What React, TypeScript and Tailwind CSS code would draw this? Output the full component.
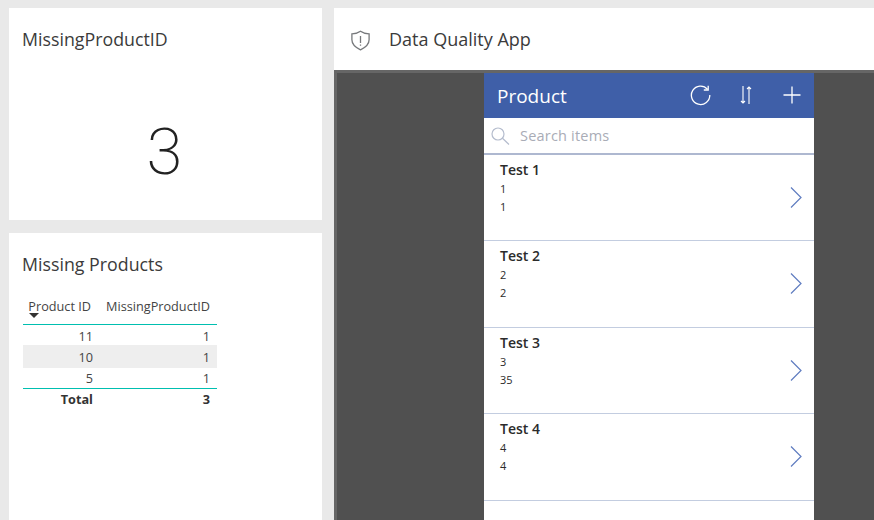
import React from 'react';

const FONT = "font-['Open_Sans','Noto_Sans',sans-serif]";

const items = [
    { title: 'Test 1', a: '1', b: '1', h: 'h-[86px]' },
    { title: 'Test 2', a: '2', b: '2', h: 'h-[87px]' },
    { title: 'Test 3', a: '3', b: '35', h: 'h-[86px]' },
    { title: 'Test 4', a: '4', b: '4', h: 'h-[87px]' },
];

const rows = [
    { id: '11', n: '1', cls: 'h-[20px] leading-[22px]' },
    { id: '10', n: '1', cls: 'h-[23px] leading-[25px] bg-[#eeeeee]' },
    { id: '5', n: '1', cls: 'h-[20px] leading-[20px]' },
];

const ListItem = ({ title, a, b, h }: { title: string; a: string; b: string; h: string }) => (
    <div className={`${h} shrink-0 border-b border-[#c3cde0] pl-4 pr-[12px] flex justify-between items-center`}>
        <div className="self-start pt-[5px] text-[#2b2b2b]">
            <div className="text-[14px] leading-[20px] font-semibold">{title}</div>
            <div className="text-[11px] leading-[19px] -mt-[1px]">{a}</div>
            <div className="text-[11px] leading-[19px] -mt-[1px]">{b}</div>
        </div>
        <svg width="12" height="21" viewBox="0 0 12 21" fill="none" stroke="#5f7cc0" strokeWidth="1.2" className="-mt-[1px]">
            <path d="M1 .5l10 10-10 10" />
        </svg>
    </div>
);

export default function App() {
    return (
        <div className={`${FONT} w-[874px] h-[520px] overflow-hidden bg-[#e9e9e9] flex gap-3 pl-[9px] pt-2 text-[#333]`}>
            <div className="w-[313px] flex flex-col gap-[13px]">
                <div className="h-[212px] bg-white px-[13px] pt-[18px] flex flex-col">
                    <div className="text-[17.8px] leading-[26px] text-[#3b3b3b]">MissingProductID</div>
                    <div className="text-center font-['Roboto',sans-serif] font-extralight text-[65px] leading-[70px] mt-[65px] -ml-[2px] text-[#222]">3</div>
                </div>
                <div className="flex-1 bg-white px-[13px] pt-[18px]">
                    <div className="text-[17.8px] leading-[26px] text-[#3b3b3b]">Missing Products</div>
                    <div className="w-[194px] ml-[1px] mt-[18px] text-[12.7px] text-[#444]">
                        <div className="h-[30px] border-b-[1.5px] border-[#00bfb0] flex relative leading-[20px] pt-[1px]">
                            <div className="w-[68px] text-right">Product ID</div>
                            <div className="flex-1 pr-[7px] text-right">MissingProductID</div>
                            <svg width="10" height="5" viewBox="0 0 10 5" className="absolute left-[6px] top-[18px]">
                                <path d="M0 0h10L5 5z" fill="#333" />
                            </svg>
                        </div>
                        {rows.map(r => (
                            <div key={r.id} className={`flex ${r.cls}`}>
                                <div className="w-[70px] text-right">{r.id}</div>
                                <div className="flex-1 pr-[7px] text-right">{r.n}</div>
                            </div>
                        ))}
                        <div className="border-t-[1.5px] border-[#00bfb0] h-[22px] flex leading-[21px] font-bold text-[#333]">
                            <div className="w-[70px] text-right">Total</div>
                            <div className="flex-1 pr-[7px] text-right">3</div>
                        </div>
                    </div>
                </div>
            </div>

            <div className="flex-1 flex flex-col min-w-0">
                <div className="h-[62px] shrink-0 bg-white flex items-center pl-[16px]">
                    <svg width="21" height="21" viewBox="0 0 21 21" fill="none" stroke="#77797c" strokeWidth="1.3" className="mt-[3px]">
                        <path d="M10.5 1.2c2.3 1.700 5 2.600 8.600 2.600v6c0 4.600-3.400 7.600-8.600 10-5.200-2.400-8.600-5.400-8.600-10v-6c3.600 0 6.300-.9 8.600-2.600z" />
                        <path d="M10.500 6v7M10.500 14.400v1.400" />
                    </svg>
                    <div className="ml-[18px] text-[18px] leading-[26px] text-[#3b3b3b]">Data Quality App</div>
                </div>
                <div className="flex-1 min-h-0 bg-[#505050] border-t-[3px] border-l-[3px] border-[#666666] pl-[147px]">
                    <div className="w-[330px] h-full bg-white overflow-hidden flex flex-col">
                        <div className="h-[45px] shrink-0 bg-[#3f5fa8] flex items-center pl-[13px] text-white">
                            <div className="text-[19px] leading-[28px] flex-1">Product</div>
                            <svg width="21" height="21" viewBox="0 0 21 21" fill="none" stroke="white" strokeWidth="1.3" className="mr-[28px] -mt-[1px]">
                                <path d="M17.500 4.200A9.200 9.200 0 1 0 19.800 10" />
                                <path d="M18.200 .8v4.200h-4.400" />
                            </svg>
                            <svg width="14" height="20" viewBox="0 0 14 20" fill="none" stroke="white" strokeWidth="1.1" className="mr-[30px] -mt-[1px]">
                                <path d="M4 1v17M2 16l2 2 2-2M10 19V2M8 4l2-2 2 2" />
                            </svg>
                            <svg width="18" height="18" viewBox="0 0 18 18" fill="none" stroke="white" strokeWidth="1.3" className="mr-[13px] -mt-[1px]">
                                <path d="M9 .5v17M.5 9h17" />
                            </svg>
                        </div>
                        <div className="h-[37px] shrink-0 border-b-2 border-[#aeb8d0] flex items-center pl-[7px]">
                            <svg width="19" height="18" viewBox="0 0 19 18" fill="none" stroke="#b4bccd" strokeWidth="1.2">
                                <circle cx="7" cy="7" r="6" />
                                <path d="M11.500 11.200l6.500 6.300" />
                            </svg>
                            <div className="ml-[10px] text-[14.5px] tracking-[0.2px] text-[#a9acb6]">Search items</div>
                        </div>
                        {items.map(it => (
                            <ListItem key={it.title} {...it} />
                        ))}
                    </div>
                </div>
            </div>
        </div>
    );
}
